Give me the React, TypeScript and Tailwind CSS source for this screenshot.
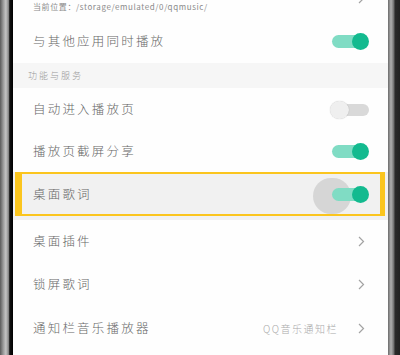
const font = "font-['Noto_Sans_CJK_SC','Noto_Sans',sans-serif]";

function Toggle({ on }: { on: boolean }) {
  if (!on) {
    return (
      <div className="relative h-[18px] w-[39px]">
        <div className="absolute left-[4px] right-0 top-[3px] h-[12px] rounded-full bg-[#d9d9d9]" />
        <div className="absolute left-0 top-0 h-[18px] w-[19px] rounded-full bg-[#efefef] shadow-[0_0_1px_rgba(0,0,0,0.25)]" />
      </div>
    );
  }
  return (
    <div className="relative h-[17px] w-[37px]">
      <div className="absolute left-0 right-[3px] top-[2px] h-[13px] rounded-full bg-[#80dcc4]" />
      <div className="absolute right-0 top-0 h-[17px] w-[17px] rounded-full bg-[#13ba8f]" />
    </div>
  );
}

function Chevron() {
  return (
    <svg width="7" height="11" viewBox="0 0 7 11" fill="none">
      <path d="M1 1l4.5 4.5L1 10" stroke="#a3a3a3" strokeWidth="1.2" />
    </svg>
  );
}

function Label({ children }: { children: string }) {
  return (
    <span className={`${font} text-[12.5px] font-light tracking-[2.2px] text-[#666]`}>{children}</span>
  );
}

function ToggleRow({ label, on, h }: { label: string; on: boolean; h: string }) {
  return (
    <div className={`flex items-center justify-between pl-[20px] pr-[19px] ${h}`}>
      <Label>{label}</Label>
      <Toggle on={on} />
    </div>
  );
}

function LinkRow({ label, value, h }: { label: string; value?: string; h: string }) {
  return (
    <div className={`flex items-center justify-between pl-[20px] pr-[23px] ${h}`}>
      <Label>{label}</Label>
      <div className="flex items-center gap-[20px]">
        {value && (
          <span className={`${font} text-[10px] font-light tracking-[1.5px] text-[#aaa]`}>{value}</span>
        )}
        <Chevron />
      </div>
    </div>
  );
}

export default function App() {
  return (
    <div className="flex h-[355px] w-[400px] overflow-hidden bg-black">
      <div className="w-[13px] bg-[linear-gradient(90deg,#5a5a5a_0%,#9a9a9a_25%,#c4c4c4_45%,#8a8a8a_65%,#111_75%,#000_100%)]" />
      <div className="flex flex-1 flex-col bg-[#fefefe]">
        <div className="flex h-[20px] justify-between pl-[20px] pr-[23px]">
          <span className={`${font} pt-[1px] text-[8px] tracking-[0.6px] text-[#8a8a8a]`}>
            当前位置：/storage/emulated/0/qqmusic/
          </span>
          <div className="mt-[-7px]">
            <Chevron />
          </div>
        </div>
        <ToggleRow label="与其他应用同时播放" on h="h-[43px]" />
        <div className="flex h-[25px] items-center bg-[#f6f6f6] pl-[15px]">
          <span className={`${font} text-[9px] font-light tracking-[2px] text-[#999]`}>功能与服务</span>
        </div>
        <ToggleRow label="自动进入播放页" on={false} h="h-[43px]" />
        <ToggleRow label="播放页截屏分享" on h="h-[41px]" />
        <div className="h-[48px] bg-[#f1f1f1] pl-[2px] pr-[3px]">
          <div className="relative flex h-[44px] items-center justify-between border-y-2 border-l-[7px] border-r-[5px] border-[#fbc51e] pl-[11px] pr-[11px]">
            <Label>桌面歌词</Label>
            <div className="absolute right-[29px] top-[4px] h-[36px] w-[38px] rounded-full bg-[#d6d6d6]" />
            <div className="relative">
              <Toggle on />
            </div>
          </div>
        </div>
        <LinkRow label="桌面插件" h="h-[42px]" />
        <LinkRow label="锁屏歌词" h="h-[44px]" />
        <LinkRow label="通知栏音乐播放器" value="QQ音乐通知栏" h="h-[44px]" />
        <div className="flex-1" />
      </div>
      <div className="w-[12px] bg-[linear-gradient(90deg,#6a6a6a_0%,#b0b0b0_25%,#7a7a7a_45%,#2a2a2a_60%,#222_100%)]" />
    </div>
  );
}
